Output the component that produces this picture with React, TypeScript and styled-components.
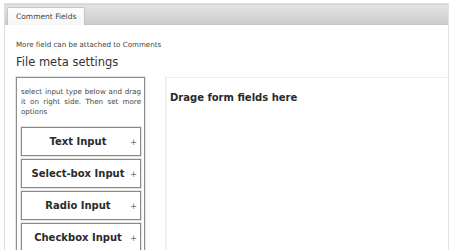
import React from "react";
import styled, { createGlobalStyle } from "styled-components";

const Global = createGlobalStyle`
  html, body { margin: 0; padding: 0; background: #ffffff; }
  body { font-family: "DejaVu Sans", Verdana, sans-serif; color: #333; }
  #root { height: 250px; overflow: hidden; }
`;

const Frame = styled.div`
  margin: 3px 1px 0 4px;
  height: 247px;
  border-left: 1px solid #dcdcdc;
  border-right: 1px solid #e2e2e2;
  border-top: 1px solid #e0e0e0;
  box-sizing: border-box;
  display: flex;
  flex-direction: column;
`;

const TabBar = styled.div`
  height: 21px;
  box-sizing: border-box;
  background: linear-gradient(#e3e3e3, #cdcdcd);
  border-top: 1px solid #d4d4d4;
  border-bottom: 1px solid #c4c4c4;
  display: flex;
  align-items: flex-end;
  padding-left: 2px;
`;

const Tab = styled.div`
  height: 18px;
  margin-bottom: -1px;
  box-sizing: border-box;
  padding: 0 8px 0 8px;
  background: linear-gradient(#fdfdfd, #f6f6f6);
  border: 1px solid #c6c6c6;
  border-bottom: none;
  border-radius: 2px 2px 0 0;
  font-size: 7.5px;
  line-height: 17px;
  color: #444;
`;

const Content = styled.div`
  flex: 1;
  display: flex;
  flex-direction: column;
  padding-left: 11px;
  min-height: 0;
`;

const Intro = styled.div`
  font-size: 7.1px;
  color: #444;
  margin-top: 15px;
  line-height: 9px;
`;

const Title = styled.div`
  font-size: 11.5px;
  color: #333;
  margin-top: 6px;
  line-height: 14px;
`;

const Columns = styled.div`
  flex: 1;
  display: flex;
  margin-top: 8px;
  min-height: 0;
`;

const Palette = styled.div`
  width: 129px;
  box-sizing: border-box;
  border: 1px solid #8e8e8e;
  border-bottom: none;
  box-shadow: 0 0 0 0.5px #c8c8c8;
  padding: 10px 3px 0 4px;
  display: flex;
  flex-direction: column;
  gap: 3px;
`;

const Hint = styled.div`
  font-size: 7.1px;
  line-height: 10px;
  color: #444;
  text-align: justify;
  margin-bottom: 7px;
  margin-top: -1px;
`;

const FieldButton = styled.div`
  position: relative;
  height: 29px;
  box-sizing: border-box;
  border: 1px solid #8a8a8a;
  box-shadow: 0 0 0 0.5px #c4c4c4;
  display: flex;
  align-items: center;
  justify-content: center;
  padding-right: 6px;
  font-weight: bold;
  font-size: 10px;
  color: #2a2a2a;
  flex-shrink: 0;
`;

const Plus = styled.span`
  position: absolute;
  right: 3px;
  top: 50%;
  transform: translateY(-50%);
  font-size: 8px;
  font-weight: normal;
  color: #666;
`;

const DropZone = styled.div`
  flex: 1;
  margin-left: 20px;
  border-top: 1px solid #ececec;
  border-left: 2px solid #f0f0f0;
  padding: 13px 0 0 3px;
`;

const DropTitle = styled.div`
  font-weight: bold;
  font-size: 10px;
  color: #2a2a2a;
  line-height: 14px;
`;

const fields = ["Text Input", "Select-box Input", "Radio Input", "Checkbox Input"];

export default function App() {
  return (
    <>
      <Global />
      <Frame>
        <TabBar>
          <Tab>Comment Fields</Tab>
        </TabBar>
        <Content>
          <Intro>More field can be attached to Comments</Intro>
          <Title>File meta settings</Title>
          <Columns>
            <Palette>
              <Hint>select input type below and drag it on right side. Then set more options</Hint>
              {fields.map((f) => (
                <FieldButton key={f}>
                  {f}
                  <Plus>+</Plus>
                </FieldButton>
              ))}
            </Palette>
            <DropZone>
              <DropTitle>Drage form fields here</DropTitle>
            </DropZone>
          </Columns>
        </Content>
      </Frame>
    </>
  );
}
